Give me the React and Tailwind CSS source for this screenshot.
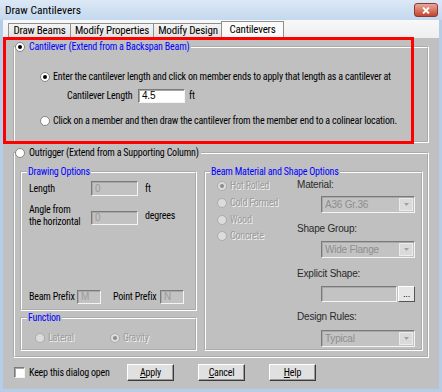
import React from "react";

const body =
  "font-['Roboto_Condensed','Liberation_Sans',sans-serif] text-[10px] leading-[12px] tracking-[-0.2px]";
const arial = "font-['Liberation_Sans',Arial,sans-serif] text-[10px] leading-[12px]";
const dis = "text-[#9b9b9b] [text-shadow:1px_1px_0_#f2f2f2]";
const groove = "border-2 [border-style:groove] border-white min-w-0";
const sunken =
  "border border-t-[#7a7a7a] border-l-[#7a7a7a] border-r-[#f4f4f4] border-b-[#f4f4f4] shadow-[inset_1px_1px_0_#a8a8a8]";

function Radio({ checked, disabled }) {
  return (
    <span
      className={`flex w-[10px] h-[10px] shrink-0 items-center justify-center rounded-full border ${
        disabled ? "border-[#ababab] bg-[#dcdcdc]" : "border-[#858585] bg-white"
      }`}
    >
      {checked && (
        <span className={`w-[4px] h-[4px] rounded-full ${disabled ? "bg-[#8c8c8c]" : "bg-black"}`} />
      )}
    </span>
  );
}

function Field({ value, className, disabled }) {
  return (
    <div
      className={`flex items-center pl-[3px] ${sunken} ${className} ${
        disabled ? "bg-[#c2c2c2] text-[#9a9a9a]" : "bg-white text-black"
      }`}
    >
      <span className={arial}>{value}</span>
    </div>
  );
}

function Combo({ value }) {
  return (
    <div className={`flex w-[94px] h-[17px] items-center ${sunken} bg-[#c3c3c3]`}>
      <span className={`flex-1 pl-[3px] ${arial} text-[#8e8e8e]`}>{value}</span>
      <span className="flex w-[14px] h-[13px] mr-[1px] items-center justify-center bg-[#dadada] border border-[#ececec]">
        <svg width="5" height="3" viewBox="0 0 5 3">
          <path d="M0 0H5L2.5 3Z" fill="#a0a0a0" />
        </svg>
      </span>
    </div>
  );
}

function Btn({ children }) {
  return (
    <button
      type="button"
      className={`w-[47px] h-[17px] ${body} text-black bg-[#e0e0e0] border border-t-white border-l-white border-r-[#3a3a3a] border-b-[#3a3a3a] shadow-[inset_-1px_-1px_0_#9a9a9a]`}
    >
      {children}
    </button>
  );
}

function Tab({ children, width, selected }) {
  return (
    <div
      className={`flex items-center justify-center border border-b-0 border-[#8e8f8f] font-['Roboto_Condensed',sans-serif] text-[11px] text-black ${width} ${
        selected
          ? "relative h-[17px] -ml-[2px] pb-[1px] bg-[#fafafa]"
          : "h-[15px] -ml-px bg-gradient-to-b from-[#f4f4f4] to-[#e0e0e0]"
      }`}
    >
      {children}
    </div>
  );
}

export default function App() {
  return (
    <div className={`w-[442px] h-[392px] flex flex-col bg-[#b4cde9] ${body}`}>
      {/* title bar */}
      <div className="h-[20px] flex items-center justify-between pl-[5px] pr-[4px] bg-gradient-to-b from-[#dce8f5] to-[#c4d8ee]">
        <span className="font-['Roboto_Condensed',sans-serif] text-[11.5px] tracking-normal text-black">
          Draw Cantilevers
        </span>
        <span className="flex w-[24px] h-[14px] items-center justify-center rounded-[3px] border border-[#8a3b31] bg-gradient-to-b from-[#e9a898] to-[#c2432e]">
          <svg width="8" height="7" viewBox="0 0 8 7">
            <path d="M1 0.5L7 6.5M7 0.5L1 6.5" stroke="white" strokeWidth="1.8" />
          </svg>
        </span>
      </div>

      <div className="flex-1 mx-[3px] mb-[3px] flex flex-col">
        {/* tabs */}
        <div className="h-[18px] flex items-end pl-[6px] bg-gradient-to-b from-[#f8f8f8] to-[#eeeeee]">
          <Tab width="w-[63px]">Draw Beams</Tab>
          <Tab width="w-[84px]">Modify Properties</Tab>
          <Tab width="w-[70px]">Modify Design</Tab>
          <Tab width="w-[63px]" selected>
            Cantilevers
          </Tab>
        </div>

        {/* panel */}
        <div className="relative flex-1 flex flex-col bg-[#c0c0c0] px-[10px] pt-[3px] text-black">
          <fieldset className={`${groove} h-[102px]`}>
            <legend className="pr-[2px]">
              <span className="flex h-[12px] items-center gap-[4px]">
                <Radio checked />
                <span className="text-[#0000ff]">Cantilever (Extend from a Backspan Beam)</span>
              </span>
            </legend>
            <div className="pl-[25px] pt-[18px] flex flex-col">
              <div className="flex items-center gap-[3px] h-[12px]">
                <Radio checked />
                <span>
                  Enter the cantilever length and click on member ends to apply that length as a
                  cantilever at
                </span>
              </div>
              <div className="flex items-center mt-[6px] ml-[27px]">
                <span className="w-[71px]">Cantilever Length</span>
                <Field value="4.5" className="w-[47px] h-[14px]" />
                <span className="ml-[4px]">ft</span>
              </div>
              <div className="flex items-center gap-[3px] h-[12px] mt-[12px]">
                <Radio />
                <span>
                  Click on a member and then draw the cantilever from the member end to a colinear
                  location.
                </span>
              </div>
            </div>
          </fieldset>

          <fieldset className={`${groove} h-[211px] mt-[4px]`}>
            <legend className="pr-[2px]">
              <span className="flex h-[12px] items-center gap-[4px]">
                <Radio />
                <span>Outrigger (Extend from a Supporting Column)</span>
              </span>
            </legend>
            <div className="flex gap-[7px] pl-[5px] pr-[4px] pt-[7px]">
              <div className="w-[177px] flex flex-col">
                <fieldset className={`${groove} h-[145px]`}>
                  <legend className="ml-[5px] px-[1px] text-[#0000ff]">Drawing Options</legend>
                  <div className="flex flex-col h-[131px] pl-[7px] pt-[3px] pb-[5px]">
                    <div className="flex items-center">
                      <span className="w-[62px]">Length</span>
                      <Field value="0" disabled className="w-[47px] h-[15px]" />
                      <span className="ml-[7px]">ft</span>
                    </div>
                    <div className="flex items-center mt-[8px]">
                      <span className="w-[62px]">
                        Angle from
                        <br />
                        the horizontal
                      </span>
                      <Field value="0" disabled className="w-[47px] h-[14px] mt-[3px]" />
                      <span className="ml-[7px]">degrees</span>
                    </div>
                    <div className="flex items-center mt-auto">
                      <span className="w-[48px]">Beam Prefix</span>
                      <Field value="M" disabled className="w-[24px] h-[14px]" />
                      <span className="w-[47px] ml-[12px]">Point Prefix</span>
                      <Field value="N" disabled className="w-[24px] h-[14px]" />
                    </div>
                  </div>
                </fieldset>
                <fieldset className={`${groove} h-[39px] mt-[1px]`}>
                  <legend className="ml-[5px] px-[1px] text-[#0000ff]">Function</legend>
                  <div className="flex items-center pl-[13px] pt-[8px]">
                    <div className="flex w-[75px] items-center gap-[3px]">
                      <Radio disabled />
                      <span className={dis}>Lateral</span>
                    </div>
                    <div className="flex items-center gap-[3px]">
                      <Radio checked disabled />
                      <span className={dis}>Gravity</span>
                    </div>
                  </div>
                </fieldset>
              </div>

              <fieldset className={`${groove} w-[219px] h-[185px]`}>
                <legend className="ml-[4px] px-[1px] text-[#0000ff]">
                  Beam Material and Shape Options
                </legend>
                <div className="flex">
                  <div className="w-[91px] pl-[11px] flex flex-col">
                    {["Hot Rolled", "Cold Formed", "Wood", "Concrete"].map((t, i) => (
                      <div key={t} className="flex h-[16.7px] items-center gap-[3px]">
                        <Radio disabled checked={i === 0} />
                        <span className={dis}>{t}</span>
                      </div>
                    ))}
                  </div>
                  <div className={`flex flex-col pt-[1px] ${arial} text-[#2a2a2a]`}>
                    <span>Material:</span>
                    <div className="ml-[24px] mt-[5px]">
                      <Combo value="A36 Gr.36" />
                    </div>
                    <span className="mt-[10px]">Shape Group:</span>
                    <div className="ml-[24px] mt-[6px]">
                      <Combo value="Wide Flange" />
                    </div>
                    <span className="mt-[10px]">Explicit Shape:</span>
                    <div className="ml-[24px] mt-[6px] flex gap-[1px]">
                      <div className={`w-[76px] h-[16px] ${sunken} bg-[#c3c3c3]`} />
                      <div className="flex w-[17px] h-[16px] items-end justify-center pb-[4px] bg-[#e6e6e6] border border-t-white border-l-white border-r-[#555555] border-b-[#555555]">
                        <span className="text-[9px] leading-[6px] text-black">...</span>
                      </div>
                    </div>
                    <span className="mt-[9px]">Design Rules:</span>
                    <div className="ml-[24px] mt-[7px]">
                      <Combo value="Typical" />
                    </div>
                  </div>
                </div>
              </fieldset>
            </div>
          </fieldset>

          <div className="flex items-center h-[17px] mt-[6px]">
            <div className="flex w-[114px] items-center gap-[4px] pl-[1px]">
              <span className={`w-[11px] h-[11px] bg-white ${sunken}`} />
              <span>Keep this dialog open</span>
            </div>
            <div className="flex gap-[24px]">
              <Btn>
                <u>A</u>pply
              </Btn>
              <Btn>
                <u>C</u>ancel
              </Btn>
              <Btn>
                <u>H</u>elp
              </Btn>
            </div>
          </div>

          {/* red highlight annotation */}
          <div className="pointer-events-none absolute left-0 -top-px w-[411px] h-[107px] border-[3px] border-[#ff0000]" />
        </div>
      </div>
    </div>
  );
}
